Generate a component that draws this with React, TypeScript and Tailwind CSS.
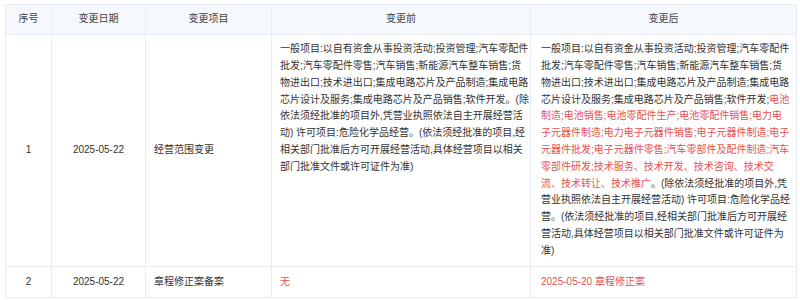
import React from 'react'

type Seg = { text: string; red?: boolean }
type Line = Seg[]

const BEFORE: Line[] = [
  [{ text: '一般项目:以自有资金从事投资活动;投资管理;汽车零配件' }],
  [{ text: '批发;汽车零配件零售;汽车销售;新能源汽车整车销售;货' }],
  [{ text: '物进出口;技术进出口;集成电路芯片及产品制造;集成电路' }],
  [{ text: '芯片设计及服务;集成电路芯片及产品销售;软件开发。(除' }],
  [{ text: '依法须经批准的项目外,凭营业执照依法自主开展经营活' }],
  [{ text: '动) 许可项目:危险化学品经营。(依法须经批准的项目,经' }],
  [{ text: '相关部门批准后方可开展经营活动,具体经营项目以相关' }],
  [{ text: '部门批准文件或许可证件为准)' }],
]

const AFTER: Line[] = [
  [{ text: '一般项目:以自有资金从事投资活动;投资管理;汽车零配件' }],
  [{ text: '批发;汽车零配件零售;汽车销售;新能源汽车整车销售;货' }],
  [{ text: '物进出口;技术进出口;集成电路芯片及产品制造;集成电路' }],
  [{ text: '芯片设计及服务;集成电路芯片及产品销售;软件开发;' }, { text: '电池', red: true }],
  [{ text: '制造;电池销售;电池零配件生产;电池零配件销售;电力电', red: true }],
  [{ text: '子元器件制造;电力电子元器件销售;电子元器件制造;电子', red: true }],
  [{ text: '元器件批发;电子元器件零售;汽车零部件及配件制造;汽车', red: true }],
  [{ text: '零部件研发;技术服务、技术开发、技术咨询、技术交', red: true }],
  [{ text: '流、技术转让、技术推广', red: true }, { text: '。(除依法须经批准的项目外,凭' }],
  [{ text: '营业执照依法自主开展经营活动) 许可项目:危险化学品经' }],
  [{ text: '营。(依法须经批准的项目,经相关部门批准后方可开展经' }],
  [{ text: '营活动,具体经营项目以相关部门批准文件或许可证件为' }],
  [{ text: '准)' }],
]

const rows = [
  { no: 1, date: '2025-05-22', item: '经营范围变更', before: BEFORE, after: AFTER },
  {
    no: 2,
    date: '2025-05-22',
    item: '章程修正案备案',
    before: [[{ text: '无', red: true }]] as Line[],
    after: [[{ text: '2025-05-20 章程修正案', red: true }]] as Line[],
  },
]

function Lines({ lines }: { lines: Line[] }) {
  return (
    <>
      {lines.map((line, i) => (
        <div key={i} className="whitespace-nowrap">
          {line.map((s, j) => (
            <span key={j} className={s.red ? 'text-[#e9504f]' : ''}>
              {s.text}
            </span>
          ))}
        </div>
      ))}
    </>
  )
}

export default function App() {
  const th = 'border border-[#e8edf3] px-[8px] py-[6px] font-normal text-center'
  const td = 'border border-[#e8edf3] py-[6.5px]'

  return (
    <div
      className="bg-white w-[800px] h-[300px] overflow-hidden pl-[5px] pt-[4px] text-[#333] text-[10px] leading-[16.8px]"
      style={{ fontFamily: '"Liberation Sans", "Noto Sans CJK SC", sans-serif' }}
    >
      <table className="table-fixed border-collapse w-[791px]">
        <colgroup>
          <col className="w-[46px]" />
          <col className="w-[94px]" />
          <col className="w-[126px]" />
          <col className="w-[259px]" />
          <col className="w-[266px]" />
        </colgroup>
        <thead>
          <tr className="bg-[#f5f8fc] text-[#444]">
            <th className={th}>序号</th>
            <th className={th}>变更日期</th>
            <th className={th}>变更项目</th>
            <th className={th}>变更前</th>
            <th className={th}>变更后</th>
          </tr>
        </thead>
        <tbody>
          {rows.map((r) => (
            <tr key={r.no}>
              <td className={`${td} px-[8px] text-center align-middle`}>{r.no}</td>
              <td className={`${td} px-[8px] text-center align-middle`}>{r.date}</td>
              <td className={`${td} px-[8px] align-middle`}>{r.item}</td>
              <td className={`${td} pl-[8px] pr-[2px] align-top`}>
                <Lines lines={r.before} />
              </td>
              <td className={`${td} pl-[10px] pr-[2px] align-top`}>
                <Lines lines={r.after} />
              </td>
            </tr>
          ))}
        </tbody>
      </table>
    </div>
  )
}
